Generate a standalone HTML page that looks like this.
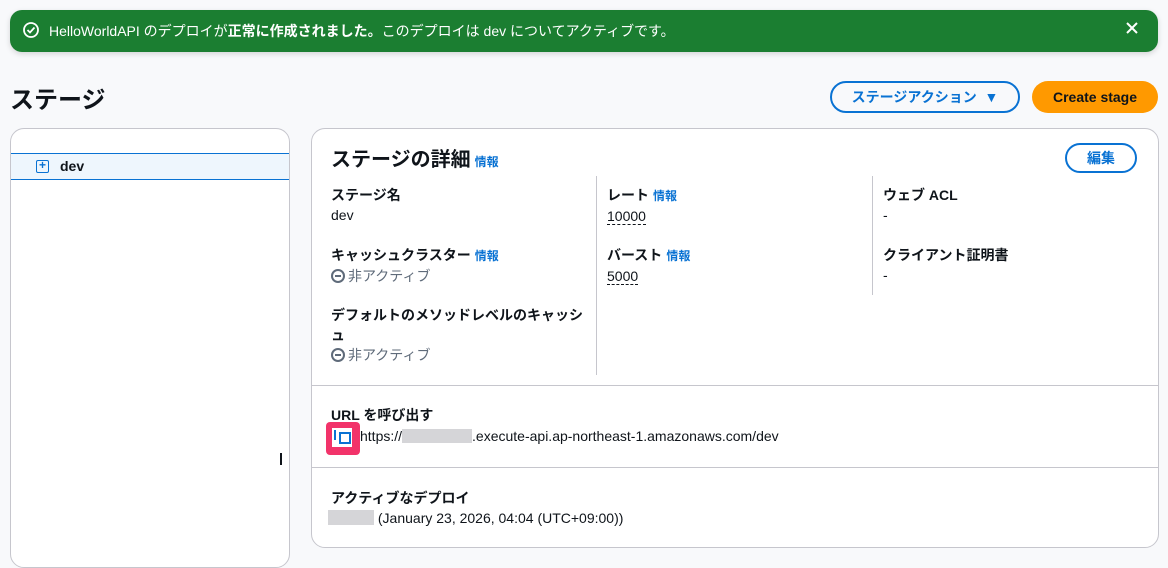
<!DOCTYPE html><html><head><meta charset="utf-8"><style>
*{box-sizing:border-box;margin:0;padding:0}
body{width:1168px;height:554px;overflow:hidden;background:#f8f9fb;font-family:"Liberation Sans","Noto Sans CJK JP",sans-serif;color:#0f141a;position:relative;font-size:14px}
.a{position:absolute}
.banner{left:10px;top:10px;width:1148px;height:42px;background:#1b7e31;border-radius:12px;color:#fff;font-size:14px;line-height:42px;padding-left:39px;box-shadow:0 2px 6px rgba(0,0,0,.15)}
.lbl{font-weight:bold;font-size:14px}
.info{color:#0972d3;font-size:12px;font-weight:bold;margin-left:4px}
.val{font-size:14px}
.gray{color:#5f6b7a}
.dash{border-bottom:1px dashed #0f141a}
.min{display:inline-block;width:14px;height:14px;border:2px solid #5f6b7a;border-radius:50%;vertical-align:-2px;position:relative;margin-right:3px}
.min:after{content:"";position:absolute;left:2px;top:4px;width:6px;height:2px;background:#5f6b7a}
</style></head><body>
<div class="a banner">HelloWorldAPI のデプロイが<b>正常に作成されました。</b>このデプロイは dev についてアクティブです。</div>
<svg class="a" style="left:22px;top:21px" width="18" height="18" viewBox="0 0 18 18"><circle cx="9" cy="9" r="7" fill="none" stroke="#fff" stroke-width="1.8"/><path d="M5.5 9l2.5 2.5 4.5-5" fill="none" stroke="#fff" stroke-width="1.8"/></svg>
<svg class="a" style="left:1125px;top:21px" width="14" height="14"><path d="M2 2l10 10M12 2L2 12" stroke="#fff" stroke-width="2"/></svg>
<div class="a" style="left:10px;top:80px;font-size:24px;font-weight:bold">ステージ</div>
<div class="a" style="left:830px;top:81px;width:190px;height:32px;border:2px solid #0972d3;border-radius:16px;color:#0972d3;font-weight:bold;text-align:center;line-height:28px">ステージアクション &nbsp;▼</div>
<div class="a" style="left:1032px;top:81px;width:126px;height:32px;background:#ff9900;border-radius:16px;font-weight:bold;text-align:center;line-height:32px">Create stage</div>
<div class="a" style="left:10px;top:128px;width:280px;height:440px;background:#fff;border:1px solid #c6c6cd;border-radius:14px"></div>
<div class="a" style="left:11px;top:153px;width:278px;height:27px;background:#eef6fd;border-top:1px solid #0972d3;border-bottom:1px solid #0972d3"></div>
<div class="a" style="left:36px;top:160px;width:13px;height:13px;border:1.5px solid #0972d3;border-radius:2px;color:#0972d3;font-size:12px;line-height:9px;text-align:center;font-weight:bold">+</div>
<div class="a lbl" style="left:60px;top:158px">dev</div>
<div class="a" style="left:280px;top:453px;width:2px;height:12px;background:#0f141a"></div>
<div class="a" style="left:311px;top:128px;width:848px;height:420px;background:#fff;border:1px solid #c6c6cd;border-radius:14px"></div>
<div class="a" style="left:331px;top:143px;font-size:20px;font-weight:bold">ステージの詳細<span class="info">情報</span></div>
<div class="a" style="left:1065px;top:143px;width:72px;height:30px;border:2px solid #0972d3;border-radius:15px;color:#0972d3;font-weight:bold;text-align:center;line-height:26px">編集</div>
<div class="a" style="left:596px;top:176px;width:1px;height:199px;background:#c6c6cd"></div>
<div class="a" style="left:872px;top:176px;width:1px;height:119px;background:#c6c6cd"></div>
<div class="a" style="left:331px;top:185px;line-height:20px"><div class="lbl">ステージ名</div><div class="val">dev</div></div>
<div class="a" style="left:331px;top:245px;line-height:20px"><div class="lbl">キャッシュクラスター<span class="info">情報</span></div><div class="gray"><span class="min"></span>非アクティブ</div></div>
<div class="a" style="left:331px;top:305px;line-height:20px;width:260px"><div class="lbl">デフォルトのメソッドレベルのキャッシュ</div><div class="gray"><span class="min"></span>非アクティブ</div></div>
<div class="a" style="left:607px;top:185px;line-height:20px"><div class="lbl">レート<span class="info">情報</span></div><div class="val"><span class="dash">10000</span></div></div>
<div class="a" style="left:607px;top:245px;line-height:20px"><div class="lbl">バースト<span class="info">情報</span></div><div class="val"><span class="dash">5000</span></div></div>
<div class="a" style="left:883px;top:185px;line-height:20px"><div class="lbl">ウェブ ACL</div><div>-</div></div>
<div class="a" style="left:883px;top:245px;line-height:20px"><div class="lbl">クライアント証明書</div><div>-</div></div>
<div class="a" style="left:312px;top:385px;width:846px;height:1px;background:#c6c6cd"></div>
<div class="a" style="left:312px;top:467px;width:846px;height:1px;background:#c6c6cd"></div>
<div class="a lbl" style="left:331px;top:405px">URL を呼び出す</div>
<div class="a" style="left:326px;top:422px;width:34px;height:33px;background:#f2336a;border-radius:4px"></div>
<div class="a" style="left:332px;top:428px;width:20px;height:19px;background:#fff"></div>
<div class="a" style="left:334px;top:430px;width:2px;height:10px;background:#0972d3"></div>
<div class="a" style="left:339px;top:432px;width:12px;height:12px;border:2px solid #0972d3"></div>
<div class="a" style="left:360px;top:428px">https://<span style="display:inline-block;width:70px;height:14px;background:#d5d5d8;vertical-align:-2px"></span>.execute-api.ap-northeast-1.amazonaws.com/dev</div>
<div class="a lbl" style="left:331px;top:488px">アクティブなデプロイ</div>
<div class="a" style="left:328px;top:510px"><span style="display:inline-block;width:46px;height:15px;background:#d5d5d8;vertical-align:-2px"></span> (January 23, 2026, 04:04 (UTC+09:00))</div>
</body></html>
